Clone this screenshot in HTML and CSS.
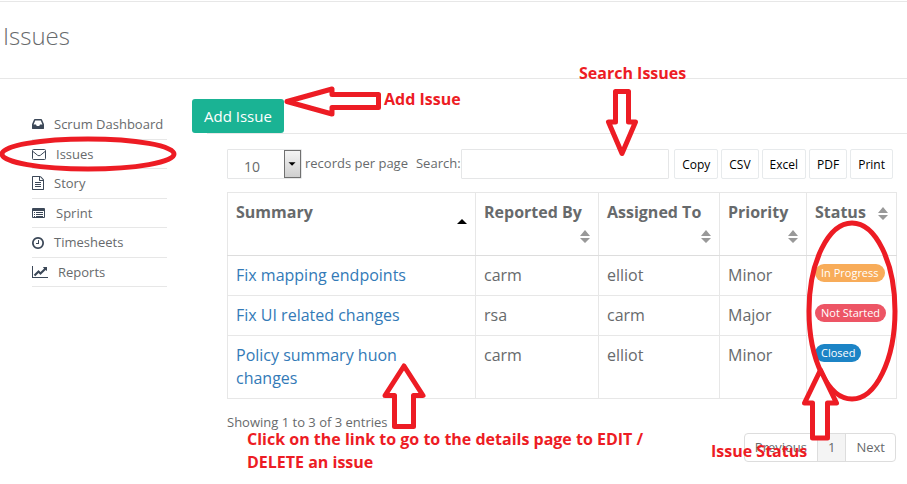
FILE: index.html
```html
<!DOCTYPE html>
<html lang="en">
<head>
<meta charset="utf-8">
<title>Issues</title>
<link rel="stylesheet" href="styles.css">
</head>
<body>
<header class="page-header"><h1>Issues</h1></header>
<div class="layout">
  <nav class="sidebar">
    <ul>
      <li><a href="#"><svg width="12" height="14" viewBox="128 0 1536 1792"><path d="M1151 960h316q-1-3-2.500-8t-2.500-8l-212-496h-708l-212 496q-1 2-2.500 8t-2.500 8h316l95 192h320zM1664 990v482q0 26-19 45t-45 19h-1408q-26 0-45-19t-19-45v-482q0-62 25-123l238-552q10-25 36-42t52-17h832q26 0 52 17t36 42l238 552q27 61 27 123z"/></svg>Scrum Dashboard</a></li>
      <li><a href="#"><svg width="14" height="14" viewBox="0 0 14 14"><path class="line" d="M1.500 2.500h11q1 0 1 1v8q0 1-1 1h-11q-1 0-1-1v-8q0-1 1-1zM1 4.500l4.500 3.700q1.500 1.200 3 0L13 4.500"/></svg>Issues</a></li>
      <li><a href="#"><svg width="12" height="14" viewBox="128 0 1536 1792"><path d="M1596 380q28 28 48 76t20 88v1152q0 40-28 68t-68 28h-1344q-40 0-68-28t-28-68v-1600q0-40 28-68t68-28h896q40 0 88 20t76 48zm-444-244v376h376q-10-29-22-41l-313-313q-12-12-41-22zm384 1528v-1024h-416q-40 0-68-28t-28-68v-416h-768v1536h1280zm-1024-864q0-14 9-23t23-9h704q14 0 23 9t9 23v64q0 14-9 23t-23 9h-704q-14 0-23-9t-9-23v-64zm736 224q14 0 23 9t9 23v64q0 14-9 23t-23 9h-704q-14 0-23-9t-9-23v-64q0-14 9-23t23-9h704zm0 256q14 0 23 9t9 23v64q0 14-9 23t-23 9h-704q-14 0-23-9t-9-23v-64q0-14 9-23t23-9h704z"/></svg>Story</a></li>
      <li><a href="#"><svg width="14" height="14" viewBox="0 0 14 14"><path fill-rule="evenodd" d="M1 2h11q1 0 1 1v8q0 1-1 1H1q-1 0-1-1V3q0-1 1-1zM1 5v6h11V5zM2 6h1v1H2zM4 6h7v1H4zM2 8h1v1H2zM4 8h7v1H4zM2 10h1v1H2zM4 10h7v1H4z"/></svg>Sprint</a></li>
      <li><a href="#"><svg width="12" height="14" viewBox="128 0 1536 1792"><path d="M1024 544v448q0 14-9 23t-23 9h-320q-14 0-23-9t-9-23v-64q0-14 9-23t23-9h224v-352q0-14 9-23t23-9h64q14 0 23 9t9 23zm416 352q0-148-73-273t-198-198-273-73-273 73-198 198-73 273 73 273 198 198 273 73 273-73 198-198 73-273zm224 0q0 209-103 385.500t-279.500 279.500-385.500 103-385.500-103-279.500-279.500-103-385.500 103-385.500 279.500-279.500 385.500-103 385.500 103 279.500 279.500 103 385.500z"/></svg>Timesheets</a></li>
      <li><a href="#"><svg width="16" height="14" viewBox="0 0 2048 1792"><path d="M2048 1536v128h-2048v-1536h128v1408h1920zm-128-1248v435q0 21-19.500 29.500t-35.500-7.500l-121-121-633 633q-10 10-23 10t-23-10l-233-233-416 416-192-192 585-585q10-10 23-10t23 10l233 233 464-464-121-121q-16-16-7.500-35.500t29.500-19.500h435q14 0 23 9t9 23z"/></svg>Reports</a></li>
    </ul>
  </nav>
  <main class="content">
    <div class="actions"><button class="add" type="button">Add Issue</button></div>
    <section class="panel">
      <div class="toolbar">
        <span class="select-box"><select id="length"><option>10</option><option>25</option><option>50</option></select><svg class="arrow" width="17" height="28" viewBox="0 0 17 28"><path d="M4 12h8l-4 4z"/></svg></span>
        <label class="per-page" for="length">records per page</label>
        <label for="search">Search:</label>
        <input id="search" type="text">
        <div class="exports">
          <button type="button">Copy</button><button type="button">CSV</button><button type="button">Excel</button><button type="button">PDF</button><button type="button">Print</button>
        </div>
      </div>
      <table>
        <colgroup><col><col class="c-reported"><col class="c-assigned"><col class="c-priority"><col class="c-status"></colgroup>
        <thead>
          <tr>
            <th>Summary<svg class="sort asc" width="10" height="23" viewBox="0 0 10 23"><path d="M0 15l5-5 5 5z"/></svg></th>
            <th>Reported By<svg class="sort" width="10" height="23" viewBox="0 0 10 23"><path d="M0 12l5-6 5 6zM0 14h10l-5 5z"/></svg></th>
            <th>Assigned To<svg class="sort" width="10" height="23" viewBox="0 0 10 23"><path d="M0 12l5-6 5 6zM0 14h10l-5 5z"/></svg></th>
            <th>Priority<svg class="sort" width="10" height="23" viewBox="0 0 10 23"><path d="M0 12l5-6 5 6zM0 14h10l-5 5z"/></svg></th>
            <th>Status<svg class="sort" width="10" height="23" viewBox="0 0 10 23"><path d="M0 12l5-6 5 6zM0 14h10l-5 5z"/></svg></th>
          </tr>
        </thead>
        <tbody>
          <tr><td><a href="#">Fix mapping endpoints</a></td><td>carm</td><td>elliot</td><td>Minor</td><td><span class="badge progress">In Progress</span></td></tr>
          <tr><td><a href="#">Fix UI related changes</a></td><td>rsa</td><td>carm</td><td>Major</td><td><span class="badge pending">Not Started</span></td></tr>
          <tr><td><a href="#">Policy summary huon changes</a></td><td>carm</td><td>elliot</td><td>Minor</td><td><span class="badge closed">Closed</span></td></tr>
        </tbody>
      </table>
      <footer class="table-footer">
        <p>Showing 1 to 3 of 3 entries</p>
        <nav class="pages"><a href="#">Previous</a><a class="current" href="#">1</a><a href="#">Next</a></nav>
      </footer>
    </section>
  </main>
</div>
<div class="notes">
  <svg width="907" height="484" viewBox="0 0 907 484">
    <ellipse cx="88" cy="154" rx="86" ry="15"/>
    <ellipse cx="852" cy="311" rx="43" ry="88"/>
    <path d="M287 101.500L332 89v5.500h46.500v13H332v6.500z"/>
    <path d="M615.500 91.500h13V122h7L622 153.500 608.500 122h7z"/>
    <path d="M404 366l19 29.500h-9.500v31h-19v-31H385z"/>
    <path d="M820.500 370l16 33h-9v35h-15v-35h-8z"/>
  </svg>
  <span class="note note-add">Add Issue</span>
  <span class="note note-search">Search Issues</span>
  <span class="note note-link">Click on the link to go to the details page to EDIT /<br>DELETE an issue</span>
  <span class="note note-status">Issue Status</span>
</div>
</body>
</html>
```
FILE: styles.css
```css
* { box-sizing: border-box; }
body {
  margin: 0;
  padding-top: 1px;
  background: #fff;
  color: #676a6c;
  font: 13px/19px "Open Sans", sans-serif;
  overflow: hidden;
}
a { color: inherit; text-decoration: none; }
button, input, select { font: inherit; }

.page-header {
  border-top: 1px solid #e7e7e7;
  border-bottom: 1px solid #e7e7e7;
  padding: 18px 3px 27px;
}
.page-header h1 { margin: 0; font-size: 24px; line-height: 31px; font-weight: 300; }

.layout { display: flex; }
.sidebar { flex: none; width: 167px; padding: 31px 0 0 32px; }
.sidebar ul { margin: 0; padding: 0; list-style: none; }
.sidebar li { border-bottom: 1px solid #e7e7e7; padding: 5px 0; line-height: 1.43; }
.sidebar a { display: flex; align-items: center; gap: 10px; }
.sidebar svg { fill: #3c4858; flex: none; }
.sidebar .line { fill: none; stroke: #3c4858; }

.content { flex: 1; min-width: 0; padding: 20px 0 0 25px; }
.actions { display: flex; background: linear-gradient(#e7e7e7, #e7e7e7) 15px 100% / 100% 1px no-repeat; padding-bottom: 1px; }
.add {
  border: 0;
  border-radius: 3px;
  background: #1ab394;
  color: #fff;
  font-size: 15px;
  line-height: 22px;
  padding: 6px 12px;
}

.panel { padding: 15px 10px 0 35px; }
.toolbar { display: flex; align-items: center; height: 30px; }
.toolbar label { padding-bottom: 2px; }
.select-box { position: relative; width: 75px; height: 30px; }
.select-box select {
  appearance: none;
  width: 100%;
  height: 30px;
  border: 1px solid #e5e6e7;
  border-radius: 1px;
  background: #fff;
  color: inherit;
  font-size: 14px;
  padding: 5px 16px 0;
}
.arrow {
  position: absolute;
  top: 1px;
  right: 1px;
  border: 1px solid #707070;
  background: linear-gradient(#f4f4f4, #cfcfcf);
  pointer-events: none;
}
.per-page { margin: 0 8px 0 3px; }
#search { flex: 1; min-width: 0; height: 30px; border: 1px solid #e5e6e7; border-radius: 1px; padding: 4px 8px; }
.exports { display: flex; gap: 3px; margin: 0 4px 0 5px; }
.exports button {
  height: 30px;
  border: 1px solid #e7eaec;
  border-radius: 2px;
  background: #fff;
  color: #000;
  font-size: 12px;
  padding: 0 7px;
}

table { width: 100%; margin-top: 13px; border-collapse: collapse; table-layout: fixed; font-size: 16px; line-height: 23px; }
.c-reported { width: 123px; }
.c-assigned { width: 121px; }
.c-priority { width: 87px; }
.c-status { width: 90px; }
th, td { border: 1px solid #e7e7e7; padding: 8px; text-align: left; vertical-align: top; }
th { border-bottom-color: #ddd; font-weight: 700; }
td:first-child { padding-right: 24px; }
td a { color: #337ab7; }
.sort { float: right; margin-left: 8px; fill: #999; }
.asc { fill: #000; margin-top: 8px; }
.badge {
  display: block;
  width: fit-content;
  border-radius: 9px;
  color: #fff;
  font-size: 11px;
  font-weight: 500;
  line-height: 18px;
  padding: 0 6px;
  white-space: nowrap;
}
.progress { background: #f8ac59; }
.pending { background: #ed5565; }
.closed { background: #1c84c6; }

.table-footer { display: flex; justify-content: space-between; padding-top: 14px; }
.table-footer p { margin: 0; }
.pages { display: flex; margin: 20px 1px 0 0; border: 1px solid #ddd; border-radius: 4px; line-height: 27px; }
.pages a { padding: 0 10px; }
.pages .current { background: #f4f4f4; border: solid #ddd; border-width: 0 1px; }

.notes { position: absolute; top: 0; left: 0; pointer-events: none; }
.notes svg { display: block; fill: none; stroke: #ed1c24; stroke-width: 5; }
.notes path { fill: #fff; stroke-linejoin: round; }
.note { position: absolute; color: #ed1c24; font: 700 16px/23px "Open Sans", sans-serif; white-space: nowrap; }
.note-add { left: 384px; top: 88px; }
.note-search { left: 579px; top: 62px; }
.note-link { left: 247px; top: 428px; }
.note-status { left: 711px; top: 440px; }
```
